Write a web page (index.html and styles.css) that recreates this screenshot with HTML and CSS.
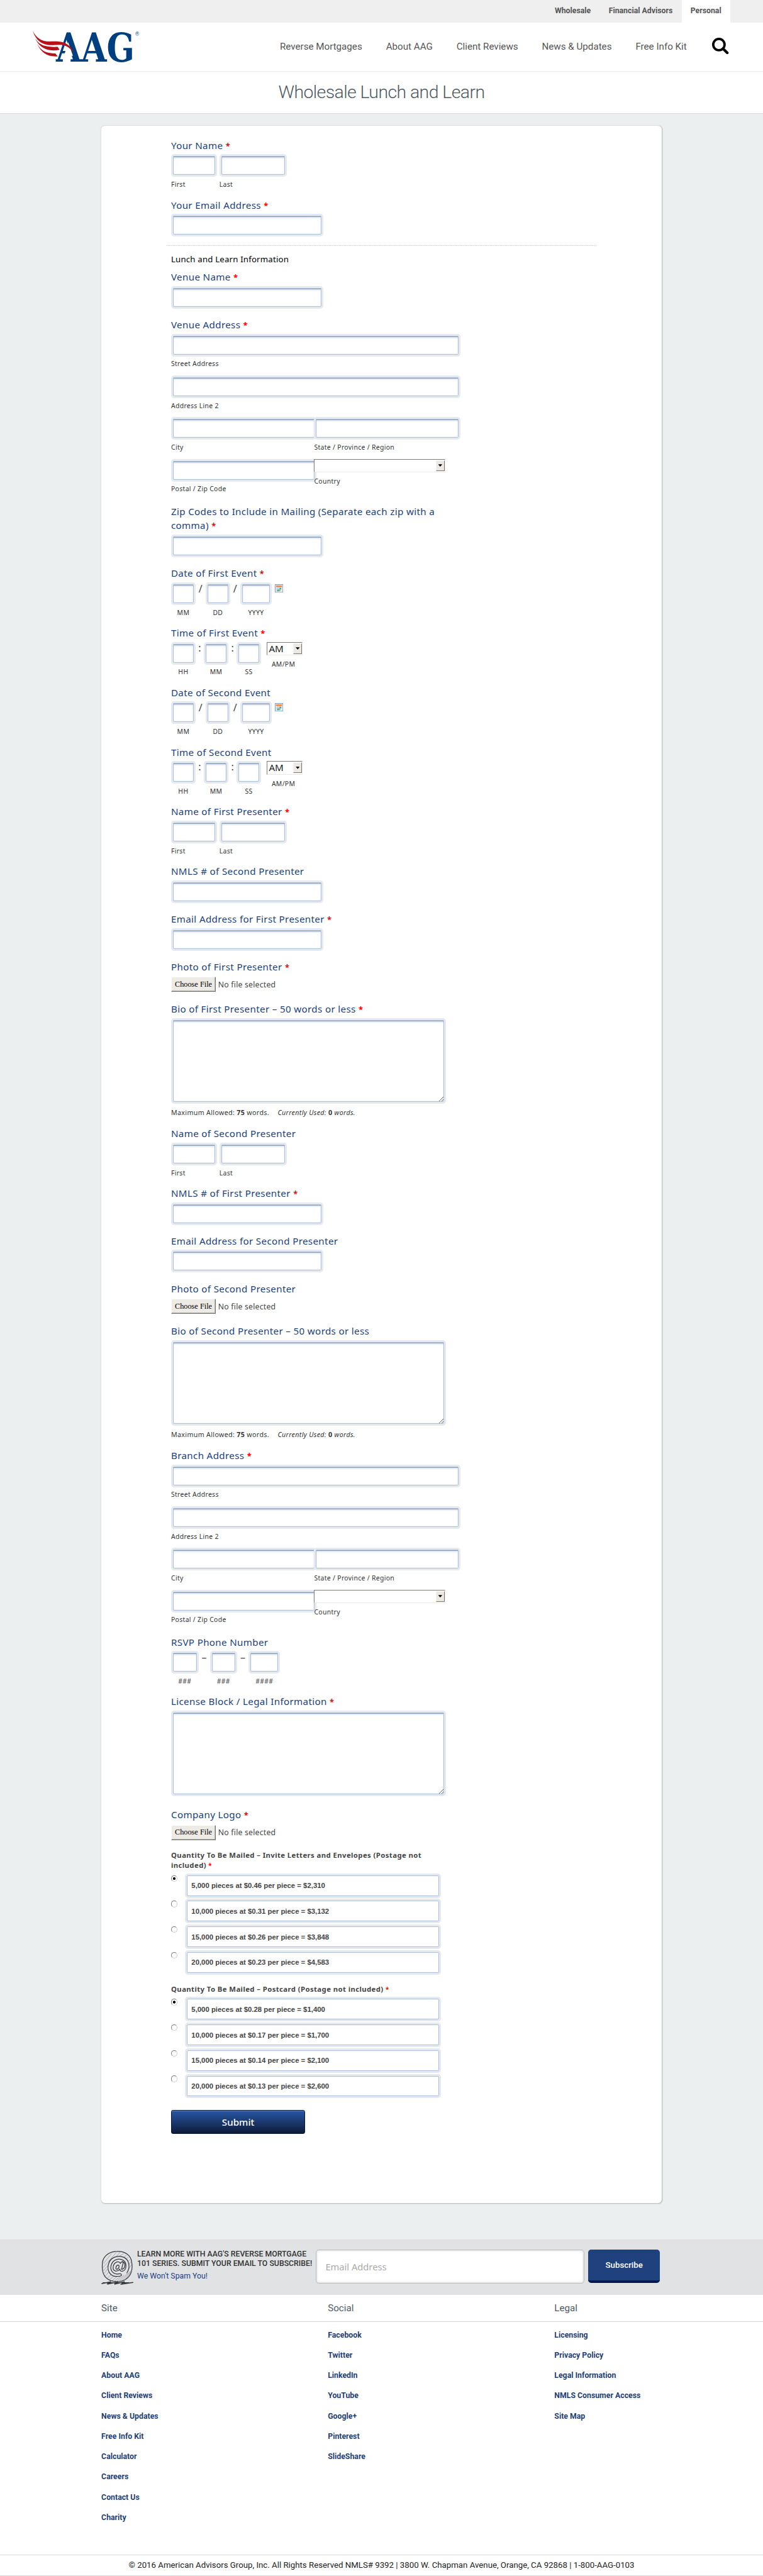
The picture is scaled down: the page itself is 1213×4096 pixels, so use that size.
FILE: index.html
```html
<!DOCTYPE html>
<html lang="en">
<head>
<meta charset="utf-8">
<title>Wholesale Lunch and Learn</title>
<link rel="stylesheet" href="styles.css">
</head>
<body>
<svg class="defs" width="0" height="0" aria-hidden="true">
  <symbol id="calendar" viewBox="0 0 14 14">
    <rect x=".5" y=".5" width="13" height="13" fill="#e6effa" stroke="#6f9bd1"/>
    <rect x="2" y="2" width="10" height="3" fill="#f58a3c"/>
    <path d="M2 7.5h10M2 10h7M4.500 5.500v7M7 5.500v7M9.500 5.500v5" stroke="#a9c3e6" fill="none"/>
    <path d="M8 6h2.500v2.500H8zM4 9h2.500v2.500H4zM7 9h2v2H7z" fill="#5aa75a"/>
  </symbol>
</svg>
<div class="page">
  <nav class="topbar">
    <a>Wholesale</a><a>Financial Advisors</a><a class="active">Personal</a>
  </nav>
  <header class="header">
    <svg class="logo" width="182" height="58" viewBox="0 0 182 58">
      <g class="logo-text">
        <text x="39" y="53" textLength="132" lengthAdjust="spacingAndGlyphs">AAG</text>
        <path d="M52.500 43L59.500 20L67.500 43z" fill="#fff"/>
        <text class="logo-reg" x="172" y="9">®</text>
      </g>
      <g fill="#b5121b">
        <path d="M0 1C6 13 15 19 28 19C47 18 60 18 70 39C58 23 48 24 34 25C15 26 5 16 0 1z"/>
        <path d="M3 12C10 24 18 29 42 28L45 33C23 37 11 29 3 12z"/>
        <path d="M7 22C14 35 22 39 38 39L42 44C24 45 14 38 7 22z"/>
      </g>
    </svg>
    <nav class="mainnav">
      <a>Reverse Mortgages</a><a>About AAG</a><a>Client Reviews</a><a>News &amp; Updates</a><a>Free Info Kit</a>
      <svg width="28" height="28" viewBox="0 0 28 28" fill="none" stroke="#000"><circle cx="11.500" cy="11.500" r="9.500" stroke-width="4"/><path d="M18.500 18.500L25.500 25.300" stroke-width="4.500" stroke-linecap="round"/></svg>
    </nav>
  </header>
  <h1 class="title">Wholesale Lunch and Learn</h1>
  <main class="main">
    <form class="card">
      <div class="field"><label>Your Name <i>*</i></label>
        <div class="row g4"><div class="cell w77"><input><small>First</small></div><div class="cell w113"><input><small>Last</small></div></div></div>
      <div class="field"><label>Your Email Address <i>*</i></label><input class="w255"></div>
      <h2 class="section">Lunch and Learn Information</h2>
      <div class="field"><label>Venue Name <i>*</i></label><input class="w255"></div>
      <div class="field"><label>Venue Address <i>*</i></label>
        <div class="address">
          <div class="cell full"><input><small>Street Address</small></div>
          <div class="cell full"><input><small>Address Line 2</small></div>
          <div class="cell half"><input><small>City</small></div><div class="cell"><input><small>State / Province / Region</small></div>
          <div class="cell half"><input><small>Postal / Zip Code</small></div><div class="cell country"><span class="select"><b></b></span><small>Country</small></div>
        </div></div>
      <div class="field"><label>Zip Codes to Include in Mailing (Separate each zip with a comma) <i>*</i></label><input class="w255"></div>
      <div class="field"><label>Date of First Event <i>*</i></label>
        <div class="row mid"><div class="cell w41"><input><small>MM</small></div><span class="sep">/</span><div class="cell w41"><input><small>DD</small></div><span class="sep">/</span><div class="cell w53"><input><small>YYYY</small></div><svg class="cal" width="14" height="14"><use href="#calendar"/></svg></div></div>
      <div class="field"><label>Time of First Event <i>*</i></label>
        <div class="row mid"><div class="cell w41"><input><small>HH</small></div><span class="sep colon">:</span><div class="cell w41"><input><small>MM</small></div><span class="sep colon">:</span><div class="cell w41"><input><small>SS</small></div><div class="cell ampm"><span class="select">AM<b></b></span><small>AM/PM</small></div></div></div>
      <div class="field"><label>Date of Second Event</label>
        <div class="row mid"><div class="cell w41"><input><small>MM</small></div><span class="sep">/</span><div class="cell w41"><input><small>DD</small></div><span class="sep">/</span><div class="cell w53"><input><small>YYYY</small></div><svg class="cal" width="14" height="14"><use href="#calendar"/></svg></div></div>
      <div class="field"><label>Time of Second Event</label>
        <div class="row mid"><div class="cell w41"><input><small>HH</small></div><span class="sep colon">:</span><div class="cell w41"><input><small>MM</small></div><span class="sep colon">:</span><div class="cell w41"><input><small>SS</small></div><div class="cell ampm"><span class="select">AM<b></b></span><small>AM/PM</small></div></div></div>
      <div class="field"><label>Name of First Presenter <i>*</i></label>
        <div class="row g4"><div class="cell w77"><input><small>First</small></div><div class="cell w113"><input><small>Last</small></div></div></div>
      <div class="field"><label>NMLS # of Second Presenter</label><input class="w255"></div>
      <div class="field"><label>Email Address for First Presenter <i>*</i></label><input class="w255"></div>
      <div class="field file"><label>Photo of First Presenter <i>*</i></label><div class="picker"><button type="button">Choose File</button><span>No file selected</span></div></div>
      <div class="field bio"><label>Bio of First Presenter – 50 words or less <i>*</i></label><textarea></textarea><p class="count">Maximum Allowed: <b>75</b> words. <em>Currently Used: <b>0</b> words.</em></p></div>
      <div class="field"><label>Name of Second Presenter</label>
        <div class="row g4"><div class="cell w77"><input><small>First</small></div><div class="cell w113"><input><small>Last</small></div></div></div>
      <div class="field"><label>NMLS # of First Presenter <i>*</i></label><input class="w255"></div>
      <div class="field"><label>Email Address for Second Presenter</label><input class="w255"></div>
      <div class="field file"><label>Photo of Second Presenter</label><div class="picker"><button type="button">Choose File</button><span>No file selected</span></div></div>
      <div class="field bio"><label>Bio of Second Presenter – 50 words or less</label><textarea></textarea><p class="count">Maximum Allowed: <b>75</b> words. <em>Currently Used: <b>0</b> words.</em></p></div>
      <div class="field"><label>Branch Address <i>*</i></label>
        <div class="address">
          <div class="cell full"><input><small>Street Address</small></div>
          <div class="cell full"><input><small>Address Line 2</small></div>
          <div class="cell half"><input><small>City</small></div><div class="cell"><input><small>State / Province / Region</small></div>
          <div class="cell half"><input><small>Postal / Zip Code</small></div><div class="cell country"><span class="select"><b></b></span><small>Country</small></div>
        </div></div>
      <div class="field"><label>RSVP Phone Number</label>
        <div class="row mid"><div class="cell w46"><input><small>###</small></div><span class="sep dash">–</span><div class="cell w46"><input><small>###</small></div><span class="sep dash">–</span><div class="cell w53"><input><small>####</small></div></div></div>
      <div class="field license"><label>License Block / Legal Information <i>*</i></label><textarea></textarea></div>
      <div class="field file"><label>Company Logo <i>*</i></label><div class="picker"><button type="button">Choose File</button><span>No file selected</span></div></div>
      <fieldset class="options"><legend>Quantity To Be Mailed – Invite Letters and Envelopes (Postage not included) <i>*</i></legend>
        <div class="opt"><input type="radio" name="letters" checked><input class="txt" value="5,000 pieces at $0.46 per piece = $2,310"></div>
        <div class="opt"><input type="radio" name="letters"><input class="txt" value="10,000 pieces at $0.31 per piece = $3,132"></div>
        <div class="opt"><input type="radio" name="letters"><input class="txt" value="15,000 pieces at $0.26 per piece = $3,848"></div>
        <div class="opt"><input type="radio" name="letters"><input class="txt" value="20,000 pieces at $0.23 per piece = $4,583"></div>
      </fieldset>
      <fieldset class="options"><legend>Quantity To Be Mailed – Postcard (Postage not included) <i>*</i></legend>
        <div class="opt"><input type="radio" name="postcard" checked><input class="txt" value="5,000 pieces at $0.28 per piece = $1,400"></div>
        <div class="opt"><input type="radio" name="postcard"><input class="txt" value="10,000 pieces at $0.17 per piece = $1,700"></div>
        <div class="opt"><input type="radio" name="postcard"><input class="txt" value="15,000 pieces at $0.14 per piece = $2,100"></div>
        <div class="opt"><input type="radio" name="postcard"><input class="txt" value="20,000 pieces at $0.13 per piece = $2,600"></div>
      </fieldset>
      <button class="submit" type="button">Submit</button>
    </form>
  </main>
  <section class="newsletter">
    <svg width="54" height="58" viewBox="0 0 54 58" fill="none" stroke="#33383c" stroke-width="1.300" stroke-linecap="round">
      <path d="M27 2C38 1 50 8 51 20C53 30 51 42 42 48C33 55 17 54 9 47C1 41 1 30 2 20C4 8 15 2 27 2z"/>
      <g stroke="#90959a" stroke-width=".8"><path d="M4 22L17 6M3 29L25 4M3 35L32 3M5 39L10 32M7 43L14 35M10 47L19 39M14 49L23 42M18 51L28 43M22 52L33 43M26 52L38 42M30 52L44 39M35 51L49 35M40 49L51 34M42 9L35 13M45 12L39 17M48 16L43 20M49 20L45 27M50 25L46 32M37 6L30 10"/></g>
      <path d="M43 38C49 29 47 16 38 12C27 7 14 13 12 24C9 35 16 44 25 44C30 44 33 44 34 42C34 38 30 40 26 40C18 39 14 32 17 24C20 15 30 13 37 17C44 22 42 34 36 35C33 36 31 34 31 32C25 38 19 34 20 28C21 20 29 17 32 22C35 17 38 20 36 24L34 32C40 32 42 22 36 19" fill="#e1e2e4"/>
      <path d="M28 25C25 25 23 32 26 32C29 32 32 25 28 25z"/>
      <path d="M1 56L16 53L10 57L28 53L22 57L39 53L34 57L53 54M3 54.500H46" stroke-width="1.600"/>
    </svg>
    <div class="pitch"><strong>LEARN MORE WITH AAG'S REVERSE MORTGAGE<br>101 SERIES. SUBMIT YOUR EMAIL TO SUBSCRIBE!</strong><span>We Won't Spam You!</span></div>
    <input placeholder="Email Address">
    <button type="button">Subscribe</button>
  </section>
  <footer>
    <div class="cols heads"><span>Site</span><span>Social</span><span>Legal</span></div>
    <div class="cols links">
      <div><a>Home</a><a>FAQs</a><a>About AAG</a><a>Client Reviews</a><a>News &amp; Updates</a><a>Free Info Kit</a><a>Calculator</a><a>Careers</a><a>Contact Us</a><a>Charity</a></div>
      <div><a>Facebook</a><a>Twitter</a><a>LinkedIn</a><a>YouTube</a><a>Google+</a><a>Pinterest</a><a>SlideShare</a></div>
      <div><a>Licensing</a><a>Privacy Policy</a><a>Legal Information</a><a>NMLS Consumer Access</a><a>Site Map</a></div>
    </div>
    <p class="copyright"><span>© 2016 American Advisors Group, Inc. All Rights Reserved NMLS# 9392 | 3800 W. Chapman Avenue, Orange, CA 92868 | 1-800-AAG-0103</span></p>
  </footer>
</div>
</body>
</html>
```
FILE: styles.css
```css
* { box-sizing: border-box; }
body { margin: 0; background: #fff; }
.defs { position: absolute; }
.page {
  zoom: 0.94768;
  width: 1280px;
  height: 4322px;
  overflow: hidden;
  font-family: Roboto, sans-serif;
  color: #444;
}

/* Header */
.topbar {
  height: 38px;
  padding-right: 55px;
  display: flex;
  justify-content: flex-end;
  background: #efefef;
}
.topbar a {
  padding: 0 15px;
  font-size: 13px;
  font-weight: 700;
  line-height: 37px;
  color: #555;
}
.topbar .active { background: #fff; }
.header {
  height: 82px;
  padding: 0 57px 0 55px;
  display: flex;
  justify-content: space-between;
  border-bottom: 1px solid #e9e9e9;
}
.logo { margin-top: 13px; overflow: visible; }
.logo-text { font: bold 67px "DejaVu Serif Condensed", "DejaVu Serif", serif; fill: #003f7f; }
.logo-text .logo-reg { font: 9px "Liberation Sans", sans-serif; }
.mainnav { display: flex; gap: 40px; font-size: 16px; line-height: 81px; color: #555; }
.mainnav svg { margin: 25px 0 0 3px; }
.title {
  height: 71px;
  margin: 0;
  border-bottom: 1px solid #d6d9da;
  font-size: 30px;
  font-weight: 300;
  line-height: 69px;
  letter-spacing: -0.6px;
  text-align: center;
  color: #4c5862;
}

/* Form card */
.main { height: 3567px; padding: 20px 170px 0; background: #ebeff0; }
.card {
  height: 3485px;
  padding: 21px 110px 0 117px;
  background: #fff;
  border-radius: 6px;
  box-shadow: 1px 1px 2px rgba(0, 0, 0, .25);
  font-family: "Noto Sans", sans-serif;
}
.field { padding-bottom: 15px; }
.field label {
  display: block;
  width: 480px;
  margin-bottom: 3px;
  font-size: 16px;
  line-height: 24.05px;
  letter-spacing: 0.36px;
  color: #1c3f7c;
}
i { font-style: normal; font-size: 0.85em; font-weight: 700; line-height: 1; color: #f00; }
.field input, .field textarea, .opt .txt {
  display: block;
  height: 38px;
  width: 100%;
  margin: 0;
  padding: 0;
  border: 4px solid #e4eaee;
  border-radius: 5px;
  background: #fff;
  outline: 1px solid #b2bfd8;
  outline-offset: -5px;
  box-shadow: inset 0 2px 0 #8ea3bf, inset 0 4px 2px #dfe6ee, inset 0 0 3px 1px #e0e6f0;
}
.field .w255 { width: 255px; }
.row { display: flex; }
.g4 { gap: 4px; }
.w77 { width: 77px; }
.w113 { width: 113px; }
.w41 { width: 41px; }
.w46 { width: 46px; }
.w53 { width: 53px; }
.cell small {
  display: block;
  height: 20px;
  padding-top: 5px;
  font-size: 11px;
  line-height: 15px;
  letter-spacing: 0.35px;
  white-space: nowrap;
  color: #333;
}
.mid { text-align: center; }
.sep { width: 17px; font-size: 17px; line-height: 22px; }
.colon { width: 14px; line-height: 20px; }
.dash { width: 19px; }
.cal { margin: 3px 0 0 5px; }
.address {
  display: grid;
  grid-template-columns: 240px 245px;
  row-gap: 12px;
  padding-bottom: 3px;
}
.address .full { grid-column: span 2; }
.address .half input { width: 244px; }
.address .cell:not(.half) { position: relative; }
.select {
  display: block;
  position: relative;
  height: 23px;
  padding-left: 3px;
  border: 2px solid;
  border-color: #7e7a74 #f1efe9 #ece9e2 #7e7a74;
  background: #fff;
  font-size: 16px;
  line-height: 19px;
  text-align: left;
  color: #222;
}
.select b {
  position: absolute;
  top: 1px;
  right: 0;
  width: 15px;
  height: 18px;
  border: 1px solid;
  border-color: #f4f2ee #77736e #77736e #f4f2ee;
  background: #ece9e4;
}
.select b::after {
  content: "";
  display: block;
  width: 7px;
  height: 4px;
  margin: 6px 0 0 3px;
  background: #000;
  clip-path: polygon(0 0, 100% 0, 50% 100%);
}
.country .select { width: 220px; }
.country small { padding-top: 7px; }
.ampm { width: 61px; margin-left: 9px; }
.ampm small { padding: 7px 0 0; text-indent: -4px; }
.file { padding-bottom: 17px; }
.picker { display: flex; align-items: center; gap: 4px; padding-top: 2px; }
.picker button {
  width: 75px;
  height: 25px;
  padding: 0;
  border: 1px solid;
  border-color: #fff #77736e #77736e #fff;
  background: #eeebe6;
  box-shadow: inset -1px -1px #b5b1ab;
  font: 13px "Liberation Serif", serif;
  color: #000;
}
.picker span { font-size: 13px; letter-spacing: 0.2px; }
.field textarea { width: 461px; height: 144px; resize: both; }
.bio { padding-bottom: 14px; }
.count { margin: 6px 0 0; font-size: 11.3px; line-height: 18px; letter-spacing: 0.35px; color: #333; }
.count em { margin-left: 11px; }
.count em b { font-style: normal; }
.license { padding-bottom: 19px; }
.section {
  width: 720px;
  height: 41px;
  margin: 0 0 0 -7px;
  padding: 10px 0 0 7px;
  border-top: 1px dotted #ccc;
  font-size: 14px;
  font-weight: 400;
  line-height: 24px;
  letter-spacing: 0.18px;
  color: #000;
}

/* Price options */
.options { width: 453px; margin: 0 0 14px; padding: 0; border: 0; }
.options legend {
  padding: 0 0 4px;
  font-size: 12px;
  font-weight: 700;
  line-height: 17.5px;
  letter-spacing: 0.42px;
  color: #444;
}
.opt { display: flex; gap: 12px; height: 43px; }
.opt .txt {
  width: 430px;
  height: 41px;
  padding-left: 8px;
  font: bold 12px "Liberation Sans", sans-serif;
  color: #444;
  box-shadow: inset 0 0 2px 1px #e0e6f0;
}
.opt [type=radio] {
  appearance: none;
  width: 11px;
  height: 11px;
  margin: 3px 0 0;
  border: 1px solid;
  border-color: #777 #ccc #ccc #777;
  border-radius: 50%;
}
.opt [type=radio]:checked { background: radial-gradient(circle, #000 2px, #fff 2.5px); }
.submit {
  display: block;
  width: 225px;
  height: 40px;
  margin-top: 18px;
  padding: 0;
  border: 1px solid #0a1730;
  border-radius: 3px;
  background: linear-gradient(#2857a5, #0d1b38);
  box-shadow: inset 0 1px #5f83be;
  font: 500 16px "Noto Sans", sans-serif;
  color: #fff;
}

/* Newsletter */
.newsletter {
  height: 92px;
  padding: 15px 170px 0;
  display: flex;
  border-top: 1px solid #d8dadc;
  background: #e1e2e4;
}
.newsletter > svg { margin-top: 2px; }
.pitch { width: 306px; margin-left: 6px; font-size: 13px; line-height: 16px; white-space: nowrap; }
.pitch strong { display: block; font-weight: 500; color: #333; }
.pitch span { display: block; margin-top: 5px; color: #1f3f7f; }
.newsletter input {
  width: 450px;
  height: 57px;
  margin: 0 7px 0 -6px;
  padding: 0 15px;
  border: 1px solid #bbb;
  border-radius: 5px;
  box-shadow: inset 0 0 5px #ccc;
  font: 15.5px "Noto Sans", sans-serif;
}
.newsletter input::placeholder { color: #aaa; }
.newsletter button {
  width: 120px;
  height: 56px;
  padding: 0;
  border: 0;
  border-bottom: 5px solid #001a50;
  border-radius: 5px;
  background: #1f417d;
  font: 500 14px Roboto, sans-serif;
  color: #fff;
}

/* Footer */
.cols { display: grid; grid-template-columns: 380px 380px 1fr; padding-left: 170px; }
.heads { height: 46px; border-bottom: 1px solid #d9d9d9; font-size: 16px; line-height: 46px; color: #4f5b64; }
.links { height: 390px; padding-top: 5px; }
.links a { display: block; font-size: 13px; font-weight: 700; line-height: 34px; color: #1f3f73; }
.copyright {
  height: 36px;
  margin: 0;
  border-top: 1px solid #d9d9d9;
  border-bottom: 1px solid #d9d9d9;
  font-size: 14px;
  line-height: 34px;
  text-align: center;
  color: #222;
}
```
